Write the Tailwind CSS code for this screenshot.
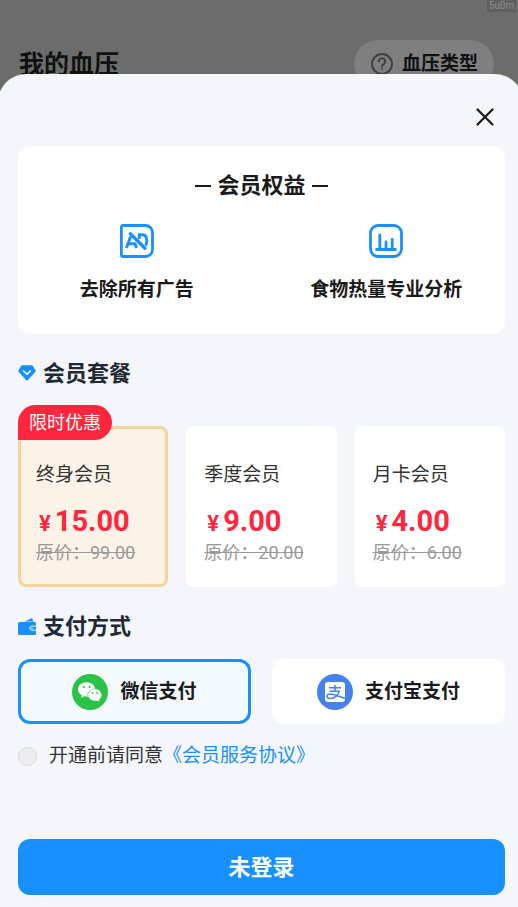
<!DOCTYPE html>
<html lang="zh-CN">
<head>
<meta charset="utf-8">
<meta name="viewport" content="width=device-width, initial-scale=1">
<title>会员套餐</title>
<script src="https://cdn.jsdelivr.net/npm/@tailwindcss/browser@4"></script>
</head>
<body class="relative min-h-screen overflow-x-hidden bg-[#6c6c6c] font-['Roboto','Noto_Sans_CJK_SC',sans-serif] text-[#1b1b1b]">

<!-- Dimmed page behind the sheet -->
<div class="absolute top-0 right-[2px] h-3 w-[29px] bg-[#606060] text-center text-[10px] leading-[11px] text-[#8b8b8b]">5u0m</div>
<header class="flex h-[90px] items-start justify-between pt-10 pr-6 pl-[19px]">
  <h1 class="text-[25px] leading-[50px] font-bold text-[#111]">我的血压</h1>
  <button type="button" class="flex h-12 items-center gap-2 rounded-full bg-[#7f7f7f] px-4 text-[19px] font-bold text-[#111]">
    <svg class="size-6" viewBox="0 0 24 24" fill="none" stroke="#404040" stroke-width="2" stroke-linecap="round" aria-hidden="true"><circle cx="12" cy="12" r="10"/><path d="M8.800 9.400a3.200 3.200 0 1 1 4.800 2.800c-1 .6-1.600 1-1.600 2.200"/><circle cx="12" cy="17.200" r=".5" fill="#404040" stroke-width="1"/></svg>
    血压类型
  </button>
</header>

<!-- Membership sheet -->
<main class="relative -mt-4 -mr-[5px] -ml-[2px] rounded-t-[28px] bg-[#f4f6fb] pr-[18px] pb-3 pl-5">
  <div class="flex h-[72px] items-center justify-end pt-[14px] pr-[10px]">
    <button type="button" aria-label="关闭" class="flex size-5 items-center justify-center">
      <svg class="size-5" viewBox="0 0 20 20" fill="none" stroke="#1b1b1b" stroke-width="2.300" stroke-linecap="round"><path d="M2.500 2.500l15 15M17.500 2.500l-15 15"/></svg>
    </button>
  </div>

  <section class="h-[188px] rounded-xl bg-white pt-6">
    <h2 class="flex items-center justify-center gap-[6px] text-[22px] leading-8 font-bold">
      <span class="h-[2px] w-4 bg-[#1b1b1b]"></span>会员权益<span class="h-[2px] w-4 bg-[#1b1b1b]"></span>
    </h2>
    <ul class="-mx-[3px] mt-[22px] grid grid-cols-2 gap-[6px] text-[19px] leading-8 font-bold">
      <li class="flex flex-col items-center gap-4">
        <svg class="size-[34px]" viewBox="0 0 34 34" fill="none" stroke="#1890ff" stroke-width="2.800" stroke-linejoin="round" aria-hidden="true"><path d="M3 1.500H25.500A7 7 0 0 1 32.500 8.500v17a7 7 0 0 1-7 7H3A1.600 1.600 0 0 1 1.400 30.900V3.100A1.600 1.600 0 0 1 3 1.500z"/><path d="M6.400 24L10.600 12.600M8.500 19.800h6.500L16.500 24M18 10.800h4.500c3.500 0 4.300 2.500 4.300 6 0 2-.3 3.600-1.300 4.700M19.300 10.500v4.500" stroke-width="3"/><path d="M10.300 9.800L25 24.200" stroke-width="3.300" stroke-linecap="round"/></svg>
        去除所有广告
      </li>
      <li class="flex flex-col items-center gap-4">
        <svg class="size-[34px]" viewBox="0 0 34 34" fill="none" stroke="#1890ff" stroke-width="2.800" stroke-linecap="round" aria-hidden="true"><rect x="1.500" y="1.500" width="31" height="31" rx="7.500"/><path d="M7.500 25.500h19M10.800 11v14M17 17.800v7.500M23.200 15.300v10"/></svg>
        食物热量专业分析
      </li>
    </ul>
  </section>

  <section>
    <h2 class="mt-6 flex items-center gap-[7px] text-[22px] leading-8 font-bold text-[#202934]">
      <svg class="w-[18px]" viewBox="0 0 18 18" aria-hidden="true"><path d="M4.200.3h9.600q.6 0 1 .5l2.800 4.700q.4.700-.2 1.300l-7.400 8.300q-1 1-2 0L.6 6.800Q0 6.200.400 5.500L3.200.8q.4-.5 1-.5z" fill="#1890ff"/><path d="M5.600 6L9 9.200 12.400 6" fill="none" stroke="#fff" stroke-width="1.500" stroke-linecap="round" stroke-linejoin="round"/></svg>
      会员套餐
    </h2>
    <div class="mt-9 grid grid-cols-3 gap-[18px]">
      <label class="relative block h-[161px] rounded-lg border-[3px] border-[#f4d49c] bg-[#fcf3e8] pt-[31px] pl-[15px]">
        <input type="radio" name="plan" class="sr-only" checked>
        <span class="absolute -top-6 -left-[3px] flex h-[35px] items-center rounded-t-[18px] rounded-br-[18px] bg-[#ff263e] px-[11px] text-[18px] text-white">限时优惠</span>
        <span class="block text-[19px] leading-[30px] text-[#333]">终身会员</span>
        <span class="mt-[15px] flex items-baseline gap-1 pl-[3px] text-[29px] leading-8 font-bold text-[#ff263e]"><span class="text-[22px]">¥</span>15.00</span>
        <s class="block text-[18px] leading-[26px] text-[#999]">原价：99.00</s>
      </label>
      <label class="block h-[161px] rounded-lg bg-white pt-[34px] pl-[18px]">
        <input type="radio" name="plan" class="sr-only">
        <span class="block text-[19px] leading-[30px] text-[#333]">季度会员</span>
        <span class="mt-[15px] flex items-baseline gap-1 pl-[3px] text-[29px] leading-8 font-bold text-[#ff263e]"><span class="text-[22px]">¥</span>9.00</span>
        <s class="block text-[18px] leading-[26px] text-[#999]">原价：20.00</s>
      </label>
      <label class="block h-[161px] rounded-lg bg-white pt-[34px] pl-[18px]">
        <input type="radio" name="plan" class="sr-only">
        <span class="block text-[19px] leading-[30px] text-[#333]">月卡会员</span>
        <span class="mt-[15px] flex items-baseline gap-1 pl-[3px] text-[29px] leading-8 font-bold text-[#ff263e]"><span class="text-[22px]">¥</span>4.00</span>
        <s class="block text-[18px] leading-[26px] text-[#999]">原价：6.00</s>
      </label>
    </div>
  </section>

  <section>
    <h2 class="mt-6 flex items-center gap-[7px] text-[22px] leading-8 font-bold text-[#202934]">
      <svg class="w-[18px]" viewBox="0 0 18 18" aria-hidden="true"><path d="M6.500 3.500L13 .4q1-.4 1.500.5L15.500 3.500z" fill="#1890ff"/><path d="M1.500 4h15Q18 4 18 5.500v10q0 1.500-1.500 1.500h-15Q0 17 0 15.500v-10Q0 4 1.500 4z" fill="#1890ff"/><path d="M18 8.200h-4.300a2 2 0 0 0 0 4H18" fill="none" stroke="#f4f6fb" stroke-width="1"/><circle cx="14" cy="10.200" r=".8" fill="#f4f6fb"/></svg>
      支付方式
    </h2>
    <div class="mt-4 grid grid-cols-2 gap-[21px] text-[19px] leading-8 font-bold">
      <label class="flex h-[65px] items-center justify-center gap-3 rounded-xl border-[3px] border-[#1890ff] bg-[#f3f9ff]">
        <input type="radio" name="pay" class="sr-only" checked>
        <svg class="size-9" viewBox="0 0 36 36" aria-hidden="true"><circle cx="18" cy="18" r="18" fill="#29c445"/><path d="M14.500 8.200c4.500 0 8.200 2.900 8.500 6.500-4.200 0-7.500 2.700-7.500 6.200 0 .7.100 1.200.3 1.800-1.300.1-2.500-.1-3.600-.4l-3 1.700.8-2.600C7.500 20 6 17.700 6 15.300c0-4 3.800-7.100 8.500-7.100z" fill="#fff"/><path d="M22.800 15.100c3.800 0 6.800 2.700 6.800 6 0 1.900-1 3.500-2.600 4.500l.6 2-2.300-1.200c-.8.300-1.600.4-2.400.4-3.800 0-6.800-2.600-6.800-5.800s3-5.900 6.700-5.900z" fill="#fff"/><g fill="#29c445"><circle cx="11.800" cy="13" r="1.100"/><circle cx="17.500" cy="13" r="1.100"/><circle cx="20.500" cy="19" r=".9"/><circle cx="25" cy="19" r=".9"/></g></svg>
        微信支付
      </label>
      <label class="flex h-[65px] items-center justify-center gap-3 rounded-xl bg-white">
        <input type="radio" name="pay" class="sr-only">
        <svg class="size-9" viewBox="0 0 36 36" aria-hidden="true"><circle cx="18" cy="18" r="18" fill="#4682ed"/><rect x="8" y="8" width="20" height="20" rx="3" fill="#fff"/><path d="M12 13.700h12M18 10.800v6M12.500 17.200h9.800c-1.200 3.800-4.700 7.400-8.800 7.400-4.700 0-4.500-4.700-.4-4.700 4 0 8 2.300 14.900 4.600" fill="none" stroke="#4682ed" stroke-width="1.500"/></svg>
        支付宝支付
      </label>
    </div>
  </section>

  <div class="mt-4 flex items-center text-[19px] leading-8 text-[#333]">
    <input id="agree" type="checkbox" class="mr-3 size-[19px] appearance-none rounded-full border border-[#d9d9d9] bg-[#ededed] checked:bg-[#1890ff]">
    <label for="agree">开通前请同意</label><a href="#" class="text-[#1890ff]">《会员服务协议》</a>
  </div>

  <button type="button" class="mt-[67px] block h-14 w-full rounded-xl bg-[#1890ff] text-[22px] font-bold text-white">未登录</button>
</main>
</body>
</html>
